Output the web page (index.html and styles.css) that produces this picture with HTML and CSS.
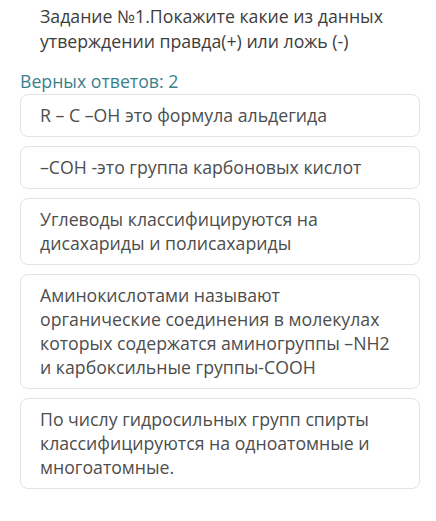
FILE: index.html
```html
<!DOCTYPE html>
<html lang="ru">
<head>
<meta charset="utf-8">
<link rel="stylesheet" href="styles.css">
</head>
<body>
<div class="page">
  <h1 class="title">Задание №1.Покажите какие из данных утверждении правда(+) или ложь (-)</h1>
  <div class="count">Верных ответов: 2</div>
  <div class="cards">
    <div class="card">R – C –OH это формула альдегида</div>
    <div class="card">–COH -это группа карбоновых кислот</div>
    <div class="card">Углеводы классифицируются на дисахариды и полисахариды</div>
    <div class="card">Аминокислотами называют органические соединения в молекулах которых содержатся аминогруппы –NH2 и карбоксильные группы-COOH</div>
    <div class="card">По числу гидросильных групп спирты классифицируются на одноатомные и многоатомные.</div>
  </div>
</div>
</body>
</html>
```
FILE: styles.css
```css
html, body {
  margin: 0;
  padding: 0;
  background: #ffffff;
}
.page {
  font-family: "Open Sans", "Noto Sans", sans-serif;
  padding: 4px 16px 0 20px;
}
.title {
  margin: 0 0 0 20px;
  font-size: 17.7px;
  font-weight: 400;
  line-height: 25px;
  color: #3d3d3d;
  width: 360px;
}
.count {
  margin-top: 15px;
  font-size: 17.7px;
  line-height: 24px;
  color: #3a7f8c;
}
.cards {
  display: flex;
  flex-direction: column;
  gap: 9px;
  margin-top: 1px;
  width: 400px;
}
.card {
  border: 1px solid #e3e3e3;
  border-radius: 8px;
  padding: 8px 19px 9px;
  font-size: 17.7px;
  line-height: 24px;
  color: #4d4d4d;
}
```
